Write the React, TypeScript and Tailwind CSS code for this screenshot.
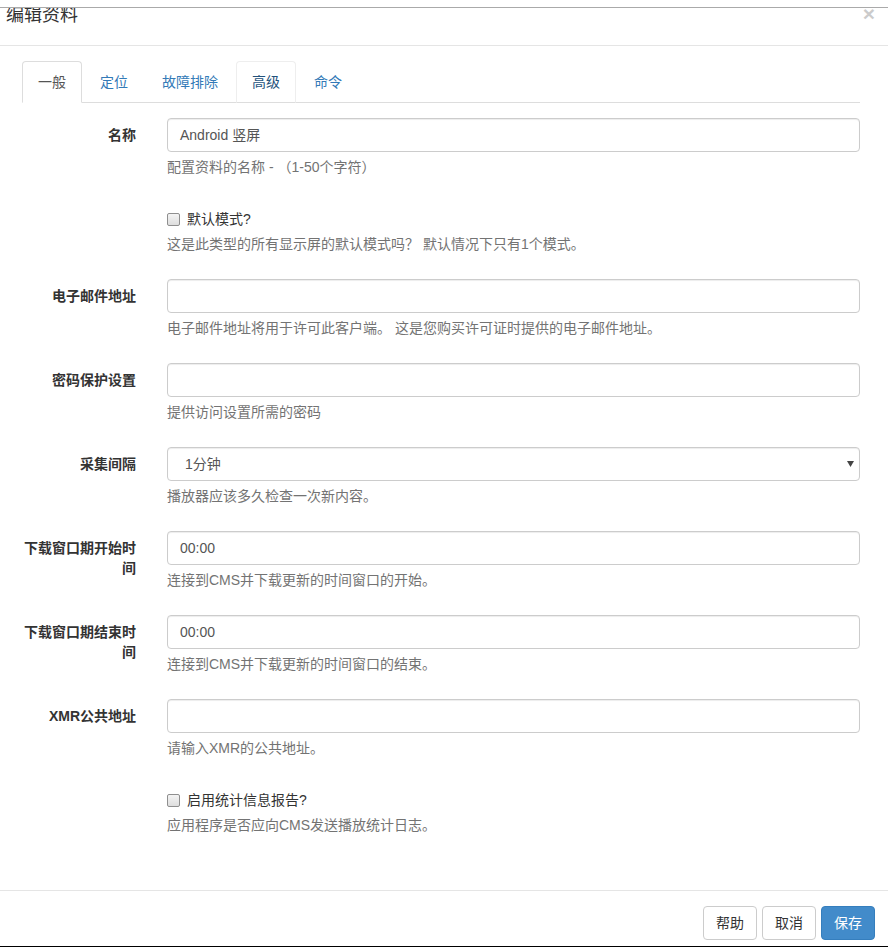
import React from "react";

const font = { fontFamily: '"Liberation Sans", "Noto Sans CJK SC", sans-serif' };

function Label({ children }: { children: React.ReactNode }) {
  return (
    <div className="w-[114px] shrink-0 pt-[7px] text-right text-[14px] leading-[20px] font-bold text-[#333]">
      {children}
    </div>
  );
}

function Help({ children }: { children: React.ReactNode }) {
  return <div className="mt-[5px] mb-[10px] text-[14px] leading-[20px] text-[#737373]">{children}</div>;
}

function InputBox({ value }: { value?: string }) {
  return (
    <div className="h-[34px] rounded-[4px] border border-[#ccc] px-[12px] py-[6px] text-[14px] leading-[20px] text-[#555] shadow-[inset_0_1px_1px_rgba(0,0,0,0.075)]">
      {value}
    </div>
  );
}

function Row({ label, children }: { label?: string; children: React.ReactNode }) {
  return (
    <div className="mb-[15px] flex gap-[31px]">
      <Label>{label}</Label>
      <div className="flex-1">{children}</div>
    </div>
  );
}

function Check({ label, help }: { label: string; help: string }) {
  return (
    <Row>
      <div className="flex items-center pt-[7px] text-[14px] leading-[20px] text-[#333]">
        <span className="mr-[7px] inline-block h-[13px] w-[13px] rounded-[2px] border border-[#8f8f8f] bg-gradient-to-b from-[#f4f4f4] to-[#dedede]" />
        <span>{label}</span>
      </div>
      <Help>{help}</Help>
    </Row>
  );
}

export default function App() {
  return (
    <div className="relative flex h-[947px] w-[888px] flex-col bg-white" style={font}>
      <div className="h-[7px] shrink-0" />
      <div className="flex flex-1 flex-col border-t border-[#aaa]">
        <div className="relative h-[38px] shrink-0 overflow-hidden border-b border-[#e5e5e5] pl-[6px]">
          <div className="-mt-[2px] text-[18px] leading-[18px] text-[#333]">编辑资料</div>
          <div className="absolute right-[13px] top-[-5px] text-[21px] font-bold leading-[21px] text-black opacity-20">×</div>
        </div>
        <div className="flex-1 pl-[22px] pr-[28px] pt-[15px]">
          <div className="flex border-b border-[#ddd] text-[14px] leading-[20px]">
            <div className="-mb-px mr-[2px] rounded-t-[4px] border border-[#ddd] border-b-white bg-white px-[15px] py-[10px] text-[#555]">一般</div>
            <div className="-mb-px mr-[2px] rounded-t-[4px] border border-transparent px-[15px] py-[10px] text-[#337ab7]">定位</div>
            <div className="-mb-px mr-[2px] rounded-t-[4px] border border-transparent px-[15px] py-[10px] text-[#337ab7]">故障排除</div>
            <div className="-mb-px mr-[2px] rounded-t-[4px] border border-[#eee] border-b-[#ddd] px-[15px] py-[10px] text-[#23527c]">高级</div>
            <div className="-mb-px mr-[2px] rounded-t-[4px] border border-transparent px-[15px] py-[10px] text-[#337ab7]">命令</div>
          </div>
          <div className="pt-[15px]">
            <Row label="名称">
              <InputBox value="Android 竖屏" />
              <Help>配置资料的名称 - （1-50个字符）</Help>
            </Row>
            <Check label="默认模式?" help="这是此类型的所有显示屏的默认模式吗？ 默认情况下只有1个模式。" />
            <Row label="电子邮件地址">
              <InputBox />
              <Help>电子邮件地址将用于许可此客户端。 这是您购买许可证时提供的电子邮件地址。</Help>
            </Row>
            <Row label="密码保护设置">
              <InputBox />
              <Help>提供访问设置所需的密码</Help>
            </Row>
            <Row label="采集间隔">
              <div className="relative h-[34px] rounded-[4px] border border-[#ccc] py-[6px] pl-[17px] text-[14px] leading-[20px] text-[#555] shadow-[inset_0_1px_1px_rgba(0,0,0,0.075)]">
                1分钟
                <svg className="absolute right-[5px] top-[13px]" width="7" height="6" viewBox="0 0 7 6">
                  <path d="M0 0 H7 L3.5 6 Z" fill="#444" />
                </svg>
              </div>
              <Help>播放器应该多久检查一次新内容。</Help>
            </Row>
            <Row label="下载窗口期开始时间">
              <InputBox value="00:00" />
              <Help>连接到CMS并下载更新的时间窗口的开始。</Help>
            </Row>
            <Row label="下载窗口期结束时间">
              <InputBox value="00:00" />
              <Help>连接到CMS并下载更新的时间窗口的结束。</Help>
            </Row>
            <Row label="XMR公共地址">
              <InputBox />
              <Help>请输入XMR的公共地址。</Help>
            </Row>
            <Check label="启用统计信息报告?" help="应用程序是否应向CMS发送播放统计日志。" />
          </div>
        </div>
        <div className="h-[56px] shrink-0 border-t border-[#e5e5e5] pr-[13px] pt-[15px]">
          <div className="flex justify-end gap-[5px] text-[14px] leading-[20px]">
            <div className="h-[34px] rounded-[4px] border border-[#ccc] bg-white px-[12px] py-[6px] text-[#333]">帮助</div>
            <div className="h-[34px] rounded-[4px] border border-[#ccc] bg-white px-[12px] py-[6px] text-[#333]">取消</div>
            <div className="h-[34px] rounded-[4px] border border-[#357ebd] bg-[#428bca] px-[12px] py-[6px] text-white">保存</div>
          </div>
        </div>
      </div>
      <div className="h-px shrink-0 bg-black" />
    </div>
  );
}
